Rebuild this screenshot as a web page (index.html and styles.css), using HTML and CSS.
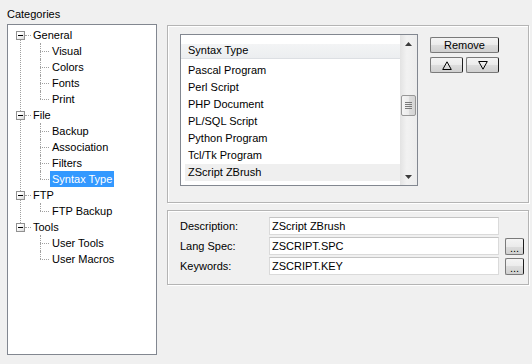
FILE: index.html
```html
<!DOCTYPE html>
<html lang="en">
<head>
  <meta charset="UTF-8">
  <title>Categories</title>
  <link rel="stylesheet" href="styles.css">
</head>
<body>

<div class="dialog">
  <div class="categories">
    <div class="caption">Categories</div>
    <div class="tree-box">
      <ul class="tree">
        <li class="root">
          <div class="root-row"><span class="toggle"></span><span class="label">General</span></div>
          <ul class="kids">
            <li><div class="kid-row"><span class="label">Visual</span></div></li>
            <li><div class="kid-row"><span class="label">Colors</span></div></li>
            <li><div class="kid-row"><span class="label">Fonts</span></div></li>
            <li><div class="kid-row"><span class="label">Print</span></div></li>
          </ul>
        </li>
        <li class="root">
          <div class="root-row"><span class="toggle"></span><span class="label">File</span></div>
          <ul class="kids">
            <li><div class="kid-row"><span class="label">Backup</span></div></li>
            <li><div class="kid-row"><span class="label">Association</span></div></li>
            <li><div class="kid-row"><span class="label">Filters</span></div></li>
            <li><div class="kid-row"><span class="label selected">Syntax Type</span></div></li>
          </ul>
        </li>
        <li class="root">
          <div class="root-row"><span class="toggle"></span><span class="label">FTP</span></div>
          <ul class="kids">
            <li><div class="kid-row"><span class="label">FTP Backup</span></div></li>
          </ul>
        </li>
        <li class="root">
          <div class="root-row"><span class="toggle"></span><span class="label">Tools</span></div>
          <ul class="kids">
            <li><div class="kid-row"><span class="label">User Tools</span></div></li>
            <li><div class="kid-row"><span class="label">User Macros</span></div></li>
          </ul>
        </li>
      </ul>
    </div>
  </div>

  <div class="settings">
    <div class="group group-top">
      <div class="listbox">
        <div class="list-body">
          <div class="list-head">Syntax Type</div>
          <div class="list-rows">
            <div class="list-row">Pascal Program</div>
            <div class="list-row">Perl Script</div>
            <div class="list-row">PHP Document</div>
            <div class="list-row">PL/SQL Script</div>
            <div class="list-row">Python Program</div>
            <div class="list-row">Tcl/Tk Program</div>
            <div class="list-row selected">ZScript ZBrush</div>
          </div>
        </div>
        <div class="scrollbar">
          <div class="scroll-btn">
            <svg width="7" height="4" viewBox="0 0 7 4"><polygon points="3.5,0 7,4 0,4" fill="#3c3c3c"/></svg>
          </div>
          <div class="scroll-track">
            <div class="thumb">
              <svg width="7" height="7" viewBox="0 0 7 7">
                <rect x="0" y="0" width="7" height="1" fill="#7a7a7a"/>
                <rect x="0" y="2" width="7" height="1" fill="#7a7a7a"/>
                <rect x="0" y="4" width="7" height="1" fill="#7a7a7a"/>
                <rect x="0" y="6" width="7" height="1" fill="#7a7a7a"/>
              </svg>
            </div>
          </div>
          <div class="scroll-btn">
            <svg width="7" height="4" viewBox="0 0 7 4"><polygon points="0,0 7,0 3.5,4" fill="#3c3c3c"/></svg>
          </div>
        </div>
      </div>

      <div class="side-buttons">
        <button class="btn btn-wide">Remove</button>
        <div class="arrows">
          <button class="btn btn-arrow">
            <svg width="10" height="9" viewBox="0 0 10 9"><polygon points="5,0.8 9.3,8.5 0.7,8.5" fill="none" stroke="#000" stroke-width="1"/></svg>
          </button>
          <button class="btn btn-arrow">
            <svg width="10" height="9" viewBox="0 0 10 9"><polygon points="0.7,0.5 9.3,0.5 5,8.2" fill="none" stroke="#000" stroke-width="1"/></svg>
          </button>
        </div>
      </div>
    </div>

    <div class="group group-bottom">
      <div class="fields">
        <label class="field-label">Description:</label>
        <input class="field" type="text" value="ZScript ZBrush" readonly>
        <span></span>

        <label class="field-label">Lang Spec:</label>
        <input class="field" type="text" value="ZSCRIPT.SPC" readonly>
        <button class="btn btn-browse">...</button>

        <label class="field-label">Keywords:</label>
        <input class="field" type="text" value="ZSCRIPT.KEY" readonly>
        <button class="btn btn-browse">...</button>
      </div>
    </div>
  </div>
</div>

</body>
</html>
```

FILE: styles.css
```css
/* Options dialog, classic look */
body {
  margin: 0;
  background-color: #f0f0f0;
  font-family: "Liberation Sans", Arial, sans-serif;
  font-size: 11px;
  color: #000;
}
.dialog {
  display: flex;
  padding: 8px 0 0 7px;
}

/* Left: category tree */
.categories {
  width: 150px;
}
.caption {
  height: 13px;
  line-height: 13px;
  margin-bottom: 3px;
}
.tree-box {
  height: 331px;
  box-sizing: border-box;
  border: 1px solid #828790;
  background: #fff;
  padding-top: 2px;
}
.tree, .kids {
  list-style: none;
  margin: 0;
  padding: 0;
}
.root, .kids li {
  position: relative;
}
.root:not(:last-child)::before {
  content: "";
  position: absolute;
  left: 12px;
  top: 8px;
  bottom: -8px;
  border-left: 1px dotted #a0a0a0;
}
.root-row {
  height: 16px;
  display: flex;
  align-items: flex-start;
  padding-left: 8px;
}
.toggle {
  position: relative;
  width: 9px;
  height: 9px;
  margin-top: 4px;
  box-sizing: border-box;
  border: 1px solid #919191;
  background: linear-gradient(135deg, #fff 30%, #d8d8d8);
}
.toggle::before {
  content: "";
  position: absolute;
  left: 1px;
  top: 3px;
  width: 5px;
  height: 1px;
  background: #000;
}
.toggle::after {
  content: "";
  position: absolute;
  left: 8px;
  top: 3px;
  width: 6px;
  border-top: 1px dotted #a0a0a0;
}
.root-row .label {
  margin-left: 6px;
}
.label {
  display: inline-block;
  height: 16px;
  line-height: 16px;
  padding: 0 2px;
}
.label.selected {
  background: #3399ff;
  color: #fff;
}
.kid-row {
  height: 16px;
  padding-left: 42px;
}
.kids li::before {
  content: "";
  position: absolute;
  left: 32px;
  top: 8px;
  width: 9px;
  border-top: 1px dotted #a0a0a0;
}
.kids li::after {
  content: "";
  position: absolute;
  left: 32px;
  top: 0;
  bottom: 0;
  border-left: 1px dotted #a0a0a0;
}
.kids li:last-child::after {
  bottom: auto;
  height: 8px;
}

/* Right: settings */
.settings {
  width: 362px;
  margin-left: 10px;
  margin-top: 17px;
}
.group {
  box-sizing: border-box;
  border: 1px solid #b4b4b4;
  box-shadow: 1px 1px 0 #fff, inset 1px 1px 0 #fff;
}
.group-top {
  height: 178px;
  padding: 8px 12px;
  display: flex;
  align-items: flex-start;
  gap: 12px;
}
.listbox {
  width: 238px;
  height: 152px;
  box-sizing: border-box;
  border: 1px solid #828790;
  background: #fff;
  display: flex;
}
.list-body {
  flex: 1;
  overflow: hidden;
}
.list-head {
  height: 24px;
  box-sizing: border-box;
  padding: 9px 0 0 7px;
  line-height: 13px;
  background: linear-gradient(#fff 0, #fff 40%, #f3f4f5 40%, #eceef0 100%);
  border-bottom: 1px solid #dcdfe3;
}
.list-rows {
  padding-top: 3px;
}
.list-row {
  height: 17px;
  line-height: 17px;
  margin-left: 4px;
  padding-left: 3px;
}
.list-row.selected {
  background: #efefef;
}
.scrollbar {
  width: 17px;
  display: flex;
  flex-direction: column;
  background: linear-gradient(90deg, #e3e3e3, #f2f2f2 40%, #ececec);
}
.scroll-btn {
  height: 17px;
  display: flex;
  align-items: center;
  justify-content: center;
}
.scroll-track {
  flex: 1;
}
.thumb {
  margin: 43px 0 0 1px;
  width: 15px;
  height: 21px;
  box-sizing: border-box;
  border: 1px solid #979797;
  border-radius: 2px;
  background: linear-gradient(90deg, #f5f5f5, #ebebeb 50%, #dedede 50%, #d4d4d4);
  display: flex;
  align-items: center;
  justify-content: center;
}

/* Buttons */
.side-buttons {
  margin-top: 3px;
  display: flex;
  flex-direction: column;
  gap: 4px;
}
.arrows {
  display: flex;
  gap: 3px;
}
.btn {
  box-sizing: border-box;
  height: 16px;
  padding: 0;
  margin: 0;
  font-family: "Liberation Sans", Arial, sans-serif;
  font-size: 11px;
  line-height: 13px;
  color: #000;
  border: 1px solid #7a7a7a;
  border-right-color: #1e1e1e;
  border-radius: 2px;
  background: linear-gradient(#f4f4f4, #ebebeb 50%, #dddddd 50%, #d0d0d0);
  display: flex;
  align-items: center;
  justify-content: center;
}
.btn-wide {
  width: 69px;
}
.btn-arrow {
  width: 33px;
}
.btn-browse {
  width: 19px;
  height: 17px;
  align-self: center;
  align-items: flex-end;
  line-height: 12px;
}

/* Fields */
.group-bottom {
  margin-top: 7px;
  height: 75px;
  padding: 6px 12px 0;
}
.fields {
  display: grid;
  grid-template-columns: 83px 230px 19px;
  grid-auto-rows: 18px;
  column-gap: 6px;
  row-gap: 2px;
  align-items: center;
}
.field {
  box-sizing: border-box;
  height: 18px;
  width: 230px;
  margin: 0;
  padding: 0 2px;
  font-family: "Liberation Sans", Arial, sans-serif;
  font-size: 11px;
  color: #000;
  background: #fff;
  border: 1px solid #dadada;
  border-top-color: #c4c4c4;
  outline: none;
}
```
